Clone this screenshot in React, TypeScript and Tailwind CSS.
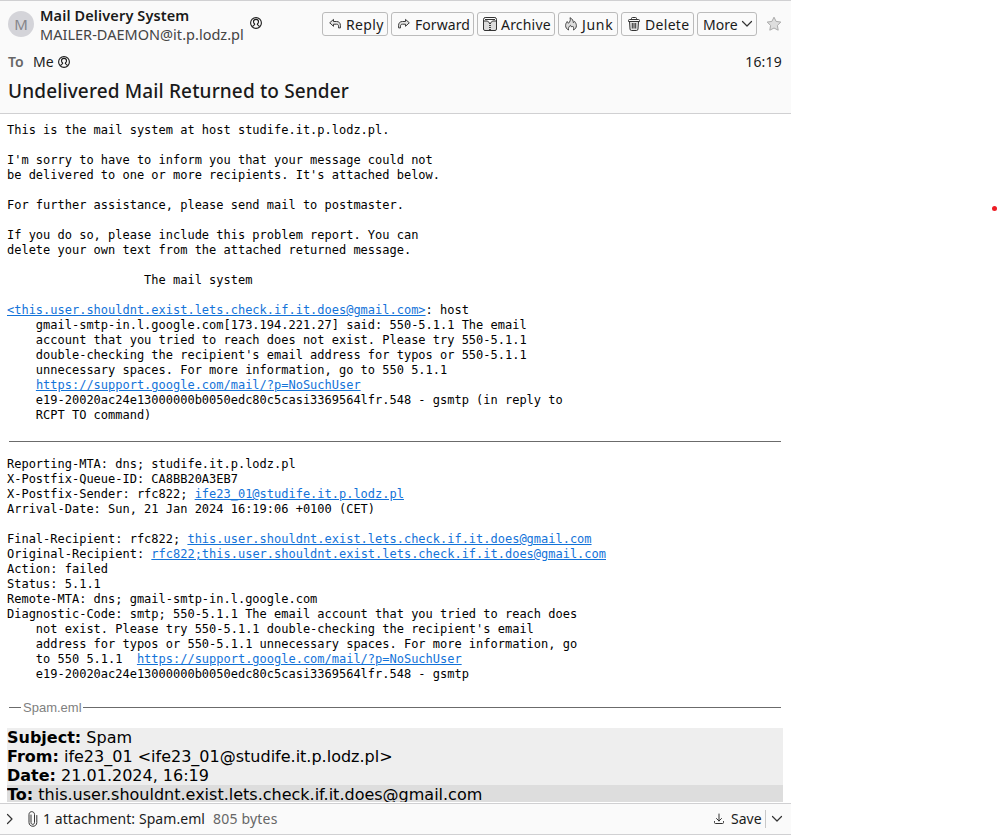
import React from "react";

const ui = "font-['Noto_Sans','Open_Sans',sans-serif]";

const report = `This is the mail system at host studife.it.p.lodz.pl.

I'm sorry to have to inform you that your message could not
be delivered to one or more recipients. It's attached below.

For further assistance, please send mail to postmaster.

If you do so, please include this problem report. You can
delete your own text from the attached returned message.

                   The mail system

`;

function Link({ children }: { children: React.ReactNode }) {
  return <a className="text-[#1373d9] underline">{children}</a>;
}

function Person() {
  return (
    <svg width="12" height="12" viewBox="0 0 12 12" fill="none" stroke="#1a1a1a" className="shrink-0">
      <circle cx="6" cy="6" r="5.4" strokeWidth="1.1" />
      <path d="M2.6 9.8C2.8 8.5 3.5 8 4.6 7.7V7C3.8 6.3 3.5 5.6 3.5 4.7C3.5 3.3 4.5 2.4 6 2.4S8.500 3.300 8.500 4.700C8.500 5.600 8.200 6.300 7.400 7V7.700C8.500 8 9.200 8.500 9.400 9.800" strokeWidth="1.1" />
    </svg>
  );
}

function Arrow({ flip = false }: { flip?: boolean }) {
  return (
    <svg width="12" height="12" viewBox="0 0 12 12" fill="#e4e4e4" stroke="#3a3a3a" strokeLinejoin="round" className={flip ? "-scale-x-100" : ""}>
      <path d="M.7 4.800L4.500 1.400V3.500H7.600C10 3.500 11.400 5.100 11.400 7.300V9.900H9.500V8.200C9.500 6.800 8.900 6.200 7.500 6.200H4.500V8.300Z" />
    </svg>
  );
}

function Archive() {
  return (
    <svg width="14" height="14" viewBox="0 0 14 14" fill="#dcdcdc" stroke="#333">
      <path d="M.5 4L2 .5H12L13.500 4V12Q13.500 13.500 12 13.500H2Q.5 13.500 .5 12Z" />
      <path d="M.5 2.500Q.5 .5 2.500 .5H11.500Q13.500 .5 13.500 2.500V4H9.500L7 6.500L4.500 4H.5Z" fill="#fafafa" />
      <path d="M2 2.500H12" />
      <path d="M7 6V13" strokeWidth="1.800" strokeDasharray="1 1" />
    </svg>
  );
}

function Flame() {
  return (
    <svg width="12" height="14" viewBox="0 0 12 14" fill="#dcdcdc" stroke="#444" strokeLinejoin="round">
      <path d="M3.500 13C1.700 12.100 .6 10.500 .6 8.500C.6 6.900 1.300 5.700 2.200 4.500L3.400 6.300C5.200 4.700 5.700 3 5 .7C7.500 2 8.300 3.600 8.300 5.600L9.700 4.500C10.800 6 11.400 7.200 11.400 8.700C11.400 10.600 10.300 12.100 8.500 13C9 11.200 8.500 9.900 7.500 9L6.600 10.100L5.500 8.300C3.800 9.500 3.200 11 3.500 13Z" />
    </svg>
  );
}

function Trash() {
  return (
    <svg width="12" height="14" viewBox="0 0 12 14" fill="none" stroke="#333">
      <path d="M1.500 4.500L2 12Q2.100 13.500 3.500 13.500H8.500Q9.900 13.500 10 12L10.500 4.500" fill="#e4e4e4" />
      <path d="M3.500 2V1.500Q3.500 .5 4.500 .5H7.500Q8.500 .5 8.500 1.500V2M.5 4.500V3.500Q.5 2.500 1.500 2.500H10.500Q11.500 2.500 11.500 3.500V4.500ZM4.300 6V11.500M6 6V11.500M7.700 6V11.500" />
    </svg>
  );
}

function Chevron({ right = false }: { right?: boolean }) {
  return (
    <svg width="12" height="12" viewBox="0 0 12 12" fill="none" stroke="#333" strokeWidth="1.200" strokeLinecap="round" strokeLinejoin="round" className={right ? "-rotate-90" : ""}>
      <path d="M1.500 3.500L6 8L10.500 3.500" />
    </svg>
  );
}

function Button({ className, icon, label, trailing }: { className: string; icon?: React.ReactNode; label: string; trailing?: React.ReactNode }) {
  return (
    <button className={`flex h-6 shrink-0 items-center rounded-[3px] border border-[#bbb] text-[14px] leading-5 whitespace-nowrap text-[#1a1a1a] ${className}`}>
      {icon}
      <span className="pt-[2px]">{label}</span>
      {trailing}
    </button>
  );
}

export default function App() {
  return (
    <div className="relative h-[835px] w-[998px] overflow-hidden bg-white">
      <main className="flex h-[835px] w-[791px] flex-col overflow-hidden">
        <header className={`h-[114px] shrink-0 border-y border-[#d0d0d2] bg-[#fafafa] text-[14px] text-[#1a1a1a] ${ui}`}>
          <div className="flex h-[50px] items-start pl-2">
            <div className="mt-[10px] flex size-[26px] shrink-0 items-center justify-center rounded-full bg-[#d4d4d9] text-[15px] text-[#85858a]">M</div>
            <div className="ml-[6px] w-[210px] pt-[5px] leading-[19px] whitespace-nowrap">
              <div className="text-[14.5px] font-semibold tracking-[0.12px]">Mail Delivery System</div>
              <div className="text-[14.5px] tracking-[0.02px] text-[#444]">MAILER-DAEMON@it.p.lodz.pl</div>
            </div>
            <div className="pt-4"><Person /></div>
            <div className="ml-[60px] flex gap-[3px] pt-[11px]">
              <Button className="w-[66px] gap-[5px] pl-1.5 tracking-[0.35px]" icon={<Arrow />} label="Reply" />
              <Button className="w-[83px] gap-[5px] pl-1.5 tracking-[0.05px]" icon={<Arrow flip />} label="Forward" />
              <Button className="w-[78px] gap-1 pl-[5px] tracking-[0.2px]" icon={<Archive />} label="Archive" />
              <Button className="w-[60px] gap-[5px] pl-1.5 tracking-[0.7px]" icon={<Flame />} label="Junk" />
              <Button className="w-[73px] gap-[5px] pl-1.5 tracking-[0.3px]" icon={<Trash />} label="Delete" />
              <Button className="w-[60px] gap-[3px] pl-[5px]" label="More" trailing={<Chevron />} />
            </div>
            <svg width="16" height="16" viewBox="0 0 16 16" className="mt-[15px] ml-[9px]" fill="#dedede" stroke="#aaa" strokeLinejoin="round">
              <path d="M8 1.200L10.100 5.400L14.800 6.100L11.400 9.400L12.200 14.200L8 12L3.800 14.200L4.600 9.400L1.200 6.100L5.900 5.400Z" />
            </svg>
          </div>
          <div className="flex h-[23px] items-center pr-[9px] pb-[2px] pl-2">
            <span className="w-[25px] font-semibold text-[#666]">To</span>
            <span className="w-[25px]">Me</span>
            <Person />
            <span className="ml-auto tracking-[0.2px]">16:19</span>
          </div>
          <h1 className="pl-2 text-[19px] leading-[34px] font-[540] tracking-[0.14px]">Undelivered Mail Returned to Sender</h1>
        </header>

        <section className="h-[689px] shrink-0 overflow-hidden pr-2 pl-[7px] text-black">
          <pre className="mt-[9px] font-['DejaVu_Sans_Mono',monospace] text-[12px] leading-[15px] tracking-[-0.008px]">
            {report}
            <Link>{"<this.user.shouldnt.exist.lets.check.if.it.does@gmail.com>"}</Link>{`: host
    gmail-smtp-in.l.google.com[173.194.221.27] said: 550-5.1.1 The email
    account that you tried to reach does not exist. Please try 550-5.1.1
    double-checking the recipient's email address for typos or 550-5.1.1
    unnecessary spaces. For more information, go to 550 5.1.1
    `}<Link>https://support.google.com/mail/?p=NoSuchUser</Link>{`
    e19-20020ac24e13000000b0050edc80c5casi3369564lfr.548 - gsmtp (in reply to
    RCPT TO command)`}
          </pre>
          <div className="mt-[18px] mr-[2px] ml-[2px] h-px bg-[#6b6b6b]" />
          <pre className="mt-[15px] font-['DejaVu_Sans_Mono',monospace] text-[12px] leading-[15px] tracking-[-0.008px]">
            {`Reporting-MTA: dns; studife.it.p.lodz.pl
X-Postfix-Queue-ID: CA8BB20A3EB7
X-Postfix-Sender: rfc822; `}<Link>ife23_01@studife.it.p.lodz.pl</Link>{`
Arrival-Date: Sun, 21 Jan 2024 16:19:06 +0100 (CET)

Final-Recipient: rfc822; `}<Link>this.user.shouldnt.exist.lets.check.if.it.does@gmail.com</Link>{`
Original-Recipient: `}<Link>rfc822;this.user.shouldnt.exist.lets.check.if.it.does@gmail.com</Link>{`
Action: failed
Status: 5.1.1
Remote-MTA: dns; gmail-smtp-in.l.google.com
Diagnostic-Code: smtp; 550-5.1.1 The email account that you tried to reach does
    not exist. Please try 550-5.1.1 double-checking the recipient's email
    address for typos or 550-5.1.1 unnecessary spaces. For more information, go
    to 550 5.1.1  `}<Link>https://support.google.com/mail/?p=NoSuchUser</Link>{`
    e19-20020ac24e13000000b0050edc80c5casi3369564lfr.548 - gsmtp`}
          </pre>
          <div className="mt-[18px] mr-[2px] ml-[2px] flex h-[15px] items-center font-['Liberation_Sans',Arial,sans-serif] text-[13px] leading-[15px] text-[#808080]">
            <div className="h-px w-3 bg-[#6b6b6b]" />
            <span className="w-[62px] pl-[2px]">Spam.eml</span>
            <div className="h-px flex-1 bg-[#6b6b6b]" />
          </div>
          <div className="mt-[13px] h-[74px] overflow-hidden bg-[#eee] font-['DejaVu_Sans',sans-serif] text-[16px] leading-[19px]">
            <div><b>Subject:</b> Spam</div>
            <div><b>From:</b> ife23_01 &lt;ife23_01@studife.it.p.lodz.pl&gt;</div>
            <div><b>Date:</b> 21.01.2024, 16:19</div>
            <div className="bg-[#ddd]"><b>To:</b> this.user.shouldnt.exist.lets.check.if.it.does@gmail.com</div>
          </div>
        </section>

        <footer className={`flex h-8 shrink-0 items-center border-y border-[#d0d0d2] bg-[#fafafa] pr-2 pl-1 text-[14px] text-[#1a1a1a] ${ui}`}>
          <Chevron right />
          <svg width="10" height="16" viewBox="0 0 10 16" fill="none" stroke="#333" strokeLinecap="round" className="ml-3">
            <path d="M3 4V11.500C3 14 6.500 14 6.500 11.500V3.500C6.500 -.3 1 -.3 1 3.500V11.500C1 16.500 8.800 16.500 8.800 11.500V4.500" />
          </svg>
          <span className="ml-[5px] w-[170px] pb-[2px] tracking-[0.07px] whitespace-nowrap">1 attachment: Spam.eml</span>
          <span className="pb-[2px] tracking-[0.2px] whitespace-nowrap text-[#666]">805 bytes</span>
          <svg width="12" height="12" viewBox="0 0 12 12" fill="none" stroke="#333" strokeLinecap="round" strokeLinejoin="round" className="ml-auto">
            <path d="M6 1V8M3.500 5.500L6 8L8.500 5.500M1.500 8.500V9.500Q1.500 10.500 2.500 10.500H9.500Q10.500 10.500 10.500 9.500V8.500" />
          </svg>
          <span className="ml-[6px] w-[34px] pb-[2px] whitespace-nowrap">Save</span>
          <div className="mr-[5px] h-[18px] w-px bg-[#c8c8c8]" />
          <Chevron />
        </footer>
      </main>
      <span className="absolute top-[206px] left-[992px] size-[5px] rounded-full bg-[#ed1c24]" />
    </div>
  );
}
